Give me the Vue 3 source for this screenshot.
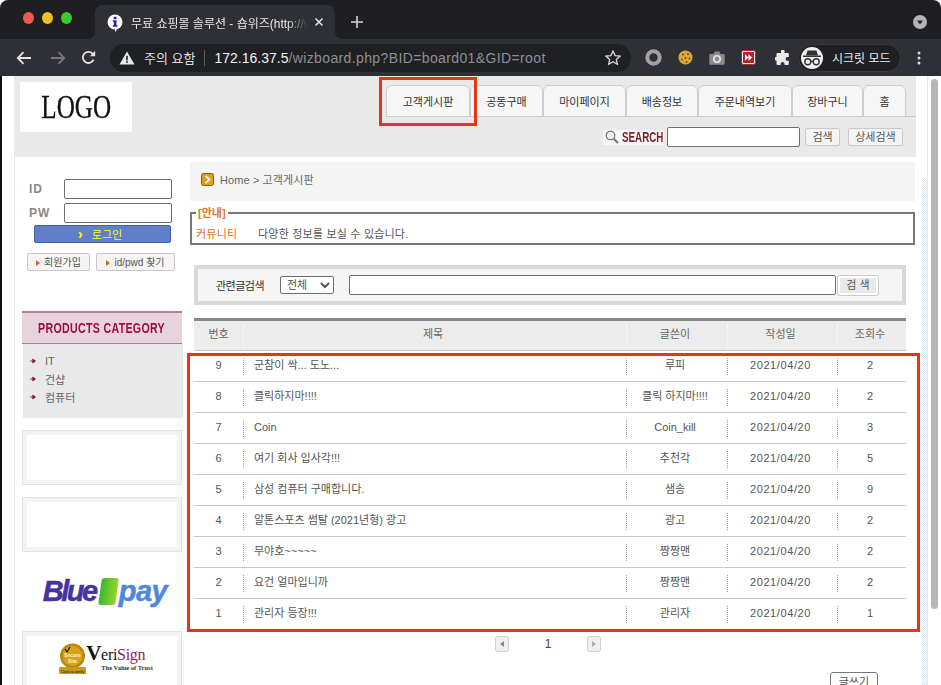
<template>
  <div class="screen">
    <!-- browser chrome -->
    <div class="tabstrip">
      <div class="lights">
        <i class="light red"></i>
        <i class="light yellow"></i>
        <i class="light green"></i>
      </div>
      <div class="tab">
        <svg class="favicon" width="16" height="18" viewBox="0 0 16 18">
          <circle cx="8" cy="8" r="7.5" fill="#fff" />
          <path d="M8 14l0 4 4-5z" fill="#fff" />
          <rect x="6.7" y="2.8" width="2.8" height="2.4" fill="#3a18b0" />
          <path d="M5.8 6.3h3.7v5h1v1.400H5.800v-1.400h1v-3.600h-1z" fill="#3a18b0" />
        </svg>
        <span class="tab-title">무료 쇼핑몰 솔루션 - 숍위즈(http://w</span>
        <svg class="tab-close" width="10" height="10" viewBox="0 0 10 10">
          <path d="M1.5 1.5l7 7M8.5 1.5l-7 7" stroke="#e6e6e6" stroke-width="1.5" />
        </svg>
      </div>
      <svg class="newtab" width="12" height="12" viewBox="0 0 12 12">
        <path d="M6 0v12M0 6h12" stroke="#d4d4d4" stroke-width="1.6" />
      </svg>
      <svg class="tabsearch" width="14" height="14" viewBox="0 0 14 14">
        <circle cx="7" cy="7" r="7" fill="#b4b4b8" />
        <path d="M3.8 5.4h6.4L7 9.6z" fill="#26262a" />
      </svg>
    </div>
    <div class="toolbar">
      <svg class="nav" width="16" height="14" viewBox="0 0 16 14">
        <path d="M15 7H2M7.5 1.2L1.8 7l5.7 5.8" fill="none" stroke="#e4e4e4" stroke-width="1.8" />
      </svg>
      <svg class="nav dim" width="16" height="14" viewBox="0 0 16 14">
        <path d="M1 7h13M8.5 1.2L14.2 7l-5.7 5.8" fill="none" stroke="#77777a" stroke-width="1.8" />
      </svg>
      <svg class="nav reload" width="15" height="15" viewBox="0 0 15 15">
        <path d="M12.6 9.6A5.6 5.6 0 1 1 11.4 3.4L13 5" fill="none" stroke="#e4e4e4" stroke-width="1.8" />
        <path d="M14.2 0.8v5.4H8.8z" fill="#e4e4e4" />
      </svg>
      <div class="omnibox">
        <svg width="16" height="14" viewBox="0 0 16 14">
          <path d="M8 0.5L15.5 13.5H0.5z" fill="#e8e8e8" />
          <rect x="7.2" y="4.8" width="1.6" height="4.6" fill="#1f2023" />
          <rect x="7.2" y="10.2" width="1.6" height="1.6" fill="#1f2023" />
        </svg>
        <span class="warn">주의 요함</span>
        <i class="omni-div"></i>
        <span class="url"><b>172.16.37.5</b>/wizboard.php?BID=board01&amp;GID=root</span>
        <svg class="star" width="16" height="15" viewBox="0 0 16 15">
          <path d="M8 1l2.1 4.6 5 .5-3.8 3.3 1.1 4.9L8 11.8l-4.4 2.5 1.1-4.9L.9 6.1l5-.5z" fill="none" stroke="#d8d8d8" stroke-width="1.3" />
        </svg>
      </div>
      <div class="extensions">
        <svg width="17" height="17" viewBox="0 0 17 17">
          <circle cx="8.5" cy="8.5" r="6.2" fill="none" stroke="#a2a2a4" stroke-width="4" />
        </svg>
        <svg width="15" height="15" viewBox="0 0 15 15">
          <circle cx="7.5" cy="7.5" r="7" fill="#d9a93a" />
          <circle cx="5" cy="4.5" r="1" fill="#6b4314" />
          <circle cx="10" cy="4" r=".9" fill="#6b4314" />
          <circle cx="7.5" cy="8" r="1" fill="#6b4314" />
          <circle cx="11.5" cy="8.5" r="1" fill="#6b4314" />
          <circle cx="4" cy="9.5" r=".9" fill="#6b4314" />
          <circle cx="8.5" cy="12" r="1" fill="#6b4314" />
        </svg>
        <svg width="16" height="14" viewBox="0 0 16 14">
          <path d="M1.5 3h3l1.2-2.4h4.6L11.5 3h3a1.2 1.2 0 0 1 1.2 1.2v8.4a1.2 1.2 0 0 1-1.2 1.2h-13A1.2 1.2 0 0 1 .3 12.600V4.200A1.200 1.200 0 0 1 1.500 3z" fill="#8b8b8d" />
          <circle cx="8" cy="8" r="3.200" fill="none" stroke="#e8e8e8" stroke-width="1.600" />
        </svg>
        <svg width="15" height="15" viewBox="0 0 15 15">
          <rect x=".5" y=".5" width="14" height="14" rx="2" fill="#f4e9e9" stroke="#a82a2a" />
          <rect x="2" y="2" width="11" height="11" fill="#b3262a" />
          <path d="M4 4.200L7.500 7.500 4 10.800zM7.500 4.200L11 7.500 7.500 10.800z" fill="#fff" />
        </svg>
        <svg class="puzzle" width="16" height="16" viewBox="0 0 16 16">
          <path d="M6 1.500a1.800 1.800 0 0 1 3.600 0V3h3.200a1 1 0 0 1 1 1v3h-1.300a1.900 1.900 0 0 0 0 3.800h1.300V14a1 1 0 0 1-1 1H9.500v-1.200a1.900 1.900 0 0 0-3.800 0V15H2.500a1 1 0 0 1-1-1V10.500H.9a1.800 1.800 0 0 1 0-3.600h.6V4a1 1 0 0 1 1-1H6z" fill="#ebebeb" />
        </svg>
      </div>
      <div class="incognito">
        <span class="spy">
          <svg width="20" height="18" viewBox="0 0 20 18">
            <path d="M5.500 1.500h9l1.500 5H4z" fill="#333" />
            <rect x="1" y="6.500" width="18" height="1.500" fill="#333" />
            <circle cx="5.800" cy="12.800" r="3" fill="none" stroke="#333" stroke-width="1.400" />
            <circle cx="14.200" cy="12.800" r="3" fill="none" stroke="#333" stroke-width="1.400" />
            <path d="M8.800 12.500h2.400" stroke="#333" stroke-width="1.400" />
          </svg>
        </span>
        <span>시크릿 모드</span>
      </div>
      <svg class="kebab" width="4" height="14" viewBox="0 0 4 14">
        <circle cx="2" cy="2" r="1.500" fill="#dcdcdc" />
        <circle cx="2" cy="7" r="1.500" fill="#dcdcdc" />
        <circle cx="2" cy="12" r="1.500" fill="#dcdcdc" />
      </svg>
    </div>

    <div class="viewport">
      <div class="edge"></div>
      <div class="site">
        <!-- shop header -->
        <div class="top">
          <div class="logo"><span>LOGO</span></div>
          <div class="top-right">
            <div class="tabs">
              <a v-for="t in tabs" :key="t.label" class="menu-tab" :style="{ width: t.w + 'px' }">{{ t.label }}</a>
            </div>
            <div class="top-search">
              <span class="search-label">
                <svg width="14" height="14" viewBox="0 0 14 14">
                  <circle cx="5.500" cy="5.500" r="4.300" fill="#f4f4f4" stroke="#666" stroke-width="1.100" />
                  <path d="M8.800 8.800l4.200 4.200" stroke="#777" stroke-width="2" />
                </svg>
                <b>SEARCH</b>
              </span>
              <input class="field top-input" type="text" />
              <button class="small-btn btn-a">검색</button>
              <button class="small-btn btn-b">상세검색</button>
            </div>
          </div>
        </div>

        <div class="cols">
          <!-- left column -->
          <div class="side">
            <div class="login-row first">
              <label>ID</label>
              <input class="field" type="text" />
            </div>
            <div class="login-row">
              <label>PW</label>
              <input class="field" type="password" />
            </div>
            <button class="login-btn"><span class="chev">›</span>로그인</button>
            <div class="member-btns">
              <button class="small-btn mem-a"><i class="tri"></i>회원가입</button>
              <button class="small-btn mem-b"><i class="tri"></i>id/pwd 찾기</button>
            </div>

            <div class="cat-title"><span>PRODUCTS CATEGORY</span></div>
            <ul class="cat-list">
              <li v-for="c in categories" :key="c">
                <svg width="6" height="6" viewBox="0 0 6 6">
                  <path d="M0 3h4M2.800 1L5.500 3 2.800 5z" fill="#8e1040" stroke="#8e1040" stroke-width=".8" />
                </svg>
                <span>{{ c }}</span>
              </li>
            </ul>

            <div class="banner"></div>
            <div class="banner"></div>
            <div class="bluepay">
              <span class="bp-blue">Blue</span>
              <i class="bp-card"></i>
              <span class="bp-pay">pay</span>
            </div>
            <div class="banner verisign">
              <span class="seal">
                <svg width="27" height="31" viewBox="0 0 27 31">
                  <circle cx="13.500" cy="13" r="12.500" fill="#b8860b" />
                  <circle cx="13.500" cy="13" r="10" fill="#d6a21e" />
                  <path d="M6 6l2 3 3-5" fill="none" stroke="#111" stroke-width="1.200" />
                  <text x="13.500" y="14" text-anchor="middle" class="seal-text">Secure</text>
                  <text x="13.500" y="20" text-anchor="middle" class="seal-text">Site</text>
                  <rect x="0" y="24" width="27" height="7" rx="1" fill="#c8991f" />
                  <text x="13.500" y="29.500" text-anchor="middle" class="seal-text dark">Click to verify</text>
                </svg>
              </span>
              <span class="vs-text">
                <span class="vs-name"><b>V</b>eri<em>Sign</em></span>
                <span class="vs-sub">The Value of Trust</span>
              </span>
            </div>
          </div>

          <!-- board -->
          <div class="main">
            <div class="crumb">
              <svg width="13" height="13" viewBox="0 0 13 13">
                <rect x=".5" y=".5" width="12" height="12" rx="2" fill="#e59a1c" stroke="#8d5a10" />
                <path d="M4.500 2.800L8.500 6.500 4.500 10.200" fill="none" stroke="#fff" stroke-width="1.800" />
              </svg>
              <span>Home &gt; 고객게시판</span>
            </div>

            <fieldset class="notice">
              <legend>[안내]</legend>
              <div class="notice-row">
                <span class="notice-name">커뮤니티</span>
                <span>다양한 정보를 보실 수 있습니다.</span>
              </div>
            </fieldset>

            <div class="board-search">
              <span class="bs-label">관련글검색</span>
              <select class="bs-select"><option>전체</option></select>
              <input class="field bs-input" type="text" />
              <button class="bs-btn"><span>검 색</span></button>
            </div>

            <div class="board">
              <div class="board-row head">
                <div class="cell num">번호</div>
                <div class="cell">제목</div>
                <div class="cell">글쓴이</div>
                <div class="cell">작성일</div>
                <div class="cell">조회수</div>
              </div>
              <div v-for="p in posts" :key="p.no" class="board-row">
                <div class="cell num">{{ p.no }}</div>
                <div class="cell subject">{{ p.title }}</div>
                <div class="cell">{{ p.writer }}</div>
                <div class="cell date">2021/04/20</div>
                <div class="cell">{{ p.hits }}</div>
              </div>
            </div>

            <div class="pager">
              <span class="page-btn"><i class="arrow left"></i></span>
              <span class="page-no">1</span>
              <span class="page-btn"><i class="arrow right"></i></span>
            </div>
            <div class="write-row">
              <button class="small-btn write">글쓰기</button>
            </div>
          </div>
        </div>
      </div>
      <div class="scrollzone">
        <div class="dots"></div>
        <div class="track"><div class="thumb"></div></div>
      </div>
    </div>

    <!-- red marks drawn over the screenshot -->
    <div class="mark mark-tab"></div>
    <div class="mark mark-list"></div>
  </div>
</template>

<script setup>
const tabs = [
  { label: '고객게시판', w: 84 },
  { label: '공동구매', w: 73 },
  { label: '마이페이지', w: 83 },
  { label: '배송정보', w: 72 },
  { label: '주문내역보기', w: 94 },
  { label: '장바구니', w: 71 },
  { label: '홈', w: 43 }
]

const categories = ['IT', '건샵', '컴퓨터']

const posts = [
  { no: 9, title: '군참이 싹... 도노...', writer: '루피', hits: 2 },
  { no: 8, title: '클릭하지마!!!!', writer: '클릭 하지마!!!!', hits: 2 },
  { no: 7, title: 'Coin', writer: 'Coin_kill', hits: 3 },
  { no: 6, title: '여기 회사 입사각!!!', writer: '추천각', hits: 5 },
  { no: 5, title: '삼성 컴퓨터 구매합니다.', writer: '샘송', hits: 9 },
  { no: 4, title: '알톤스포츠 썸탈 (2021년형) 광고', writer: '광고', hits: 2 },
  { no: 3, title: '무야호~~~~~', writer: '짱짱맨', hits: 2 },
  { no: 2, title: '요건 얼마입니까', writer: '짱짱맨', hits: 2 },
  { no: 1, title: '관리자 등장!!!', writer: '관리자', hits: 1 }
]
</script>

<style>
html,
body {
  margin: 0;
  background: #fff;
}
</style>

<style scoped>
.screen {
  position: relative;
  width: 941px;
  height: 685px;
  overflow: hidden;
  display: flex;
  flex-direction: column;
  background: #fff;
  font-family: "Liberation Sans", "Noto Sans CJK KR", sans-serif;
  font-size: 11px;
  color: #555;
}

/* chrome */
.tabstrip {
  height: 39px;
  flex: none;
  display: flex;
  align-items: flex-end;
  background: #1f1f22;
  border-radius: 8px 8px 0 0;
}
.lights {
  display: flex;
  gap: 8px;
  padding: 0 0 15px 23px;
  width: 72px;
  box-sizing: border-box;
}
.light {
  width: 12px;
  height: 12px;
  border-radius: 50%;
}
.red { background: #ec5a52; }
.yellow { background: #efc121; }
.green { background: #3ccb2f; }
.tab {
  position: relative;
  margin-left: 23px;
  width: 240px;
  height: 34px;
  display: flex;
  align-items: center;
  background: #2f3035;
  border-radius: 8px 8px 0 0;
  padding: 0 11px 0 12px;
  box-sizing: border-box;
  flex: none;
}
.tab::before,
.tab::after {
  content: "";
  position: absolute;
  bottom: 0;
  width: 8px;
  height: 8px;
}
.tab::before {
  left: -8px;
  background: radial-gradient(circle at 0 0, transparent 8px, #2f3035 8.5px);
}
.tab::after {
  right: -8px;
  background: radial-gradient(circle at 100% 0, transparent 8px, #2f3035 8.5px);
}
.favicon { flex: none; margin-top: 2px; }
.tab-title {
  margin-left: 8px;
  width: 177px;
  overflow: hidden;
  white-space: nowrap;
  font-size: 12px;
  color: #e6e6e6;
  mask-image: linear-gradient(90deg, #000 88%, transparent);
}
.tab-close { margin-left: 6px; flex: none; }
.newtab {
  margin: 0 0 11px 16px;
  flex: none;
}
.tabsearch {
  margin: 0 0 10px 550px;
  flex: none;
}
.toolbar {
  height: 37px;
  flex: none;
  display: flex;
  align-items: center;
  background: #2f3035;
  padding-left: 16px;
  box-sizing: border-box;
}
.nav { flex: none; margin-right: 18px; }
.nav.dim { margin-right: 15px; }
.nav.reload { margin-right: 14px; }
.omnibox {
  width: 521px;
  height: 28px;
  display: flex;
  align-items: center;
  flex: none;
  background: #1f2023;
  border-radius: 14px;
  padding-left: 9px;
  box-sizing: border-box;
}
.warn {
  margin-left: 9px;
  font-size: 13px;
  color: #dedede;
}
.omni-div {
  width: 1px;
  height: 16px;
  margin: 0 9px 0 9px;
  background: #5d5d60;
}
.url {
  font-size: 14px;
  color: #8f8f92;
  white-space: nowrap;
  letter-spacing: 0.38px;
}
.url b {
  font-weight: 400;
  color: #f2f2f2;
  letter-spacing: 0;
}
.star { margin-left: 59px; flex: none; }
.extensions {
  display: flex;
  align-items: center;
  gap: 16px;
  margin-left: 14px;
  flex: none;
}
.puzzle { margin-left: 3px; }
.incognito {
  display: flex;
  align-items: center;
  gap: 9px;
  width: 103px;
  height: 28px;
  margin-left: 7px;
  border-radius: 14px;
  background: #1f2023;
  border: 1px solid #3a3a3e;
  box-sizing: border-box;
  padding-left: 2px;
  font-size: 12px;
  color: #ececec;
  flex: none;
  white-space: nowrap;
}
.spy {
  width: 22px;
  height: 22px;
  border-radius: 50%;
  background: #f0f0f0;
  display: flex;
  align-items: center;
  justify-content: center;
  flex: none;
}
.kebab { margin-left: 16px; flex: none; }

/* page frame */
.viewport {
  flex: 1;
  min-height: 0;
  display: flex;
  overflow: hidden;
}
.edge {
  width: 14px;
  flex: none;
  box-sizing: border-box;
  border-left: 2px solid #111;
}
.site {
  width: 902px;
  flex: none;
}
.top {
  height: 81px;
  display: flex;
  justify-content: space-between;
  background: #e9e9e9;
}
.logo {
  width: 112px;
  height: 50px;
  margin: 6px 0 0 6px;
  background: #fff;
  display: flex;
  align-items: center;
  justify-content: center;
  padding-left: 1px;
  box-sizing: border-box;
}
.logo span {
  font-family: "Liberation Serif", serif;
  font-size: 34px;
  color: #111;
  transform: scaleX(0.74);
  -webkit-text-stroke: 0.3px #111;
}
.top-right {
  width: 530px;
  padding-top: 9px;
  box-sizing: border-box;
}
.tabs {
  display: flex;
  height: 32px;
  box-sizing: border-box;
  border-bottom: 1px solid #c8c8c8;
}
.menu-tab {
  box-sizing: border-box;
  height: 32px;
  background: #f6f6f6;
  border: 1px solid #cdcdcd;
  border-radius: 6px 6px 0 0;
  display: flex;
  align-items: center;
  justify-content: center;
  color: #333;
  font-size: 11px;
}
.top-search {
  display: flex;
  align-items: center;
  height: 20px;
  margin-top: 10px;
}
.search-label {
  width: 61px;
  height: 15px;
  margin-left: 217px;
  display: flex;
  align-items: center;
  gap: 3px;
  background: #f6f6f6;
  padding-left: 2px;
  box-sizing: border-box;
  flex: none;
}
.search-label svg { flex: none; }
.search-label b {
  flex: none;
  width: 42px;
  color: #7e1f2c;
  font-size: 14px;
  white-space: nowrap;
  transform: scaleX(0.7);
  transform-origin: left;
}
.field {
  box-sizing: border-box;
  border: 1px solid #6f6f6f;
  border-radius: 2px;
  background: #fff;
  padding: 0;
  margin: 0;
  outline: none;
  flex: none;
}
.top-input {
  width: 133px;
  height: 20px;
  margin-left: 3px;
}
.small-btn {
  box-sizing: border-box;
  height: 18px;
  padding: 0;
  background: #f4f4f4;
  border: 1px solid #c8c8c8;
  border-radius: 2px;
  color: #555;
  font-family: inherit;
  font-size: 11px;
  line-height: 15px;
  flex: none;
}
.btn-a { width: 35px; margin-left: 5px; }
.btn-b { width: 55px; margin-left: 8px; }

.cols {
  display: flex;
  align-items: flex-start;
}

/* left column */
.side {
  width: 176px;
  flex: none;
  box-sizing: border-box;
  border-left: 1px solid #e6e6e6;
  height: 560px;
}
.login-row {
  display: flex;
  align-items: center;
  height: 20px;
  margin-top: 4px;
  padding-left: 14px;
}
.login-row.first { margin-top: 22px; }
.login-row label {
  width: 35px;
  flex: none;
  font-size: 12px;
  font-weight: 700;
  letter-spacing: 1px;
  color: #888;
}
.login-row .field {
  width: 108px;
  height: 20px;
}
.login-btn {
  display: flex;
  align-items: center;
  justify-content: center;
  box-sizing: border-box;
  width: 137px;
  height: 18px;
  margin: 2px 0 0 19px;
  padding: 0 5px 0 0;
  background: #5f7fc9;
  border: 1px solid #3f60a8;
  border-radius: 2px;
  color: #ffff00;
  font-family: inherit;
  font-size: 11px;
}
.chev {
  font-size: 15px;
  font-weight: 700;
  line-height: 14px;
  margin-right: 9px;
}
.member-btns {
  display: flex;
  margin: 10px 0 0 12px;
  gap: 6px;
}
.mem-a { width: 63px; font-size: 10px; }
.mem-b { width: 79px; font-size: 10px; }
.tri {
  display: inline-block;
  border-left: 4px solid #d9641a;
  border-top: 3px solid transparent;
  border-bottom: 3px solid transparent;
  margin-right: 4px;
}
.cat-title {
  box-sizing: border-box;
  width: 160px;
  height: 33px;
  margin: 40px 0 0 7px;
  background: #e6d3dc;
  border-top: 2px solid #b97a94;
  border-bottom: 1px solid #ad7a91;
  display: flex;
  align-items: center;
  justify-content: center;
  color: #a00c45;
  white-space: nowrap;
}
.cat-title span {
  flex: none;
  font-size: 14px;
  font-weight: 700;
  letter-spacing: 0.4px;
  transform: scaleX(0.76);
}
.cat-list {
  list-style: none;
  box-sizing: border-box;
  width: 160px;
  height: 74px;
  margin: 0 0 0 8px;
  padding: 8px 0 0 7px;
  background: #e9e9e9;
}
.cat-list li {
  display: flex;
  align-items: center;
  gap: 9px;
  height: 18px;
  font-size: 11px;
  color: #666;
}
.banner {
  box-sizing: border-box;
  width: 160px;
  height: 55px;
  margin: 12px 0 0 7px;
  background: #fff;
  border: 1px solid #e2e2e2;
  outline: 4px solid #f3f3f3;
  outline-offset: -5px;
}
.bluepay {
  height: 79px;
  margin-left: 7px;
  width: 160px;
  display: flex;
  align-items: center;
  justify-content: center;
  font-family: "Liberation Sans", sans-serif;
  font-size: 29px;
  font-weight: 700;
  font-style: italic;
  box-sizing: border-box;
  padding-left: 6px;
  -webkit-text-stroke: 0.5px currentColor;
}
.bp-blue {
  color: #46339f;
  letter-spacing: -2.5px;
  margin-right: 2px;
}
.bp-card {
  width: 17px;
  height: 27px;
  margin: 0 2px;
  background: linear-gradient(90deg, #3db62f, #92d72c);
  border-radius: 3px;
  transform: skewX(-8deg);
  flex: none;
}
.bp-pay {
  color: #4d88dc;
  letter-spacing: -0.5px;
}
.verisign {
  height: 59px;
  display: flex;
  align-items: center;
  justify-content: center;
  padding: 0 0 4px 8px;
  margin-top: 0;
}
.seal { height: 31px; display: block; }
.seal-text {
  font-family: "Liberation Sans", sans-serif;
  font-size: 5px;
  font-weight: 700;
  fill: #fff3c4;
}
.seal-text.dark {
  font-size: 3.6px;
  fill: #4a3608;
}
.vs-text {
  display: flex;
  flex-direction: column;
  font-family: "Liberation Serif", serif;
  color: #111;
}
.vs-name {
  font-size: 16px;
  line-height: 17px;
  letter-spacing: -0.3px;
}
.vs-name b { font-size: 21px; font-weight: 700; }
.vs-name em { font-style: normal; color: #8a1c62; }
.vs-sub {
  font-size: 6.500px;
  font-weight: 700;
  line-height: 9px;
  margin-left: 15px;
  color: #333;
  white-space: nowrap;
}

/* board */
.main {
  width: 725px;
  flex: none;
  padding-top: 5px;
}
.crumb {
  height: 39px;
  box-sizing: border-box;
  display: flex;
  align-items: center;
  gap: 6px;
  padding: 0 0 5px 11px;
  background: #f4f4f4;
  font-size: 11px;
  letter-spacing: 0.1px;
  color: #666;
}
.notice {
  box-sizing: border-box;
  width: 725px;
  height: 39px;
  margin: 5px 0 0;
  padding: 0 4px;
  border: 2px solid #777;
  min-width: 0;
}
.notice legend {
  padding: 0 2px;
  margin: 0;
  font-size: 11px;
  line-height: 14px;
  font-weight: 700;
  color: #e2741a;
}
.notice-row {
  display: flex;
  height: 20px;
  align-items: center;
  padding-top: 3px;
  font-size: 11px;
  letter-spacing: 0.2px;
  color: #555;
}
.notice-name {
  width: 62px;
  color: #d9701c;
}
.board-search {
  box-sizing: border-box;
  width: 712px;
  height: 40px;
  margin: 20px 0 0 4px;
  display: flex;
  align-items: center;
  border: 4px solid #d8d8d8;
  background: #f5f5f5;
  padding-left: 18px;
}
.bs-label {
  width: 48px;
  flex: none;
  color: #333;
  letter-spacing: -0.5px;
  white-space: nowrap;
}
.bs-select {
  box-sizing: border-box;
  width: 54px;
  height: 18px;
  margin-left: 16px;
  padding: 0 0 0 2px;
  background: #fff;
  border: 1px solid #6f6f6f;
  border-radius: 2px;
  font-family: inherit;
  font-size: 11px;
  color: #555;
  flex: none;
}
.bs-input {
  width: 487px;
  height: 20px;
  margin-left: 15px;
}
.bs-btn {
  box-sizing: border-box;
  width: 42px;
  height: 21px;
  margin-left: 1px;
  padding: 2px;
  background: #fff;
  border: 1px solid #c8c8c8;
  border-radius: 3px;
  font-family: inherit;
  font-size: 11px;
  color: #555;
  flex: none;
}
.bs-btn span {
  display: block;
  height: 15px;
  line-height: 15px;
  background: #e9e9e9;
}
.board {
  width: 712px;
  margin: 13px 0 0 4px;
}
.board-row {
  display: grid;
  grid-template-columns: 49px 383px 101px 110px 69px;
  align-items: center;
  box-sizing: border-box;
  height: 31px;
  border-bottom: 1px solid #c8c8c8;
}
.board-row.head {
  height: 33px;
  border-top: 3px solid #888;
  background: #ececec;
  color: #666;
}
.cell {
  box-sizing: border-box;
  height: 17px;
  line-height: 15px;
  text-align: center;
  padding-right: 4px;
  border-left: 1px dotted #999;
  white-space: nowrap;
}
.head .cell {
  height: 24px;
  line-height: 20px;
  border-left-color: #fff;
}
.cell.num {
  border-left: none;
  padding-right: 0;
}
.cell.subject {
  text-align: left;
  padding-left: 10px;
}
.cell.date { letter-spacing: 0.6px; }
.pager {
  display: flex;
  align-items: center;
  justify-content: center;
  width: 712px;
  margin: 6px 0 0 2px;
}
.page-btn {
  box-sizing: border-box;
  width: 14px;
  height: 16px;
  display: flex;
  align-items: center;
  justify-content: center;
  background: #f0f0f0;
  border: 1px solid #cfcfcf;
  border-radius: 3px;
  flex: none;
}
.arrow {
  border-top: 3px solid transparent;
  border-bottom: 3px solid transparent;
}
.arrow.left { border-right: 4px solid #888; }
.arrow.right { border-left: 4px solid #aaa; }
.page-no {
  width: 78px;
  text-align: center;
  font-size: 12px;
  color: #444;
}
.write-row {
  display: flex;
  justify-content: flex-end;
  width: 688px;
  margin: 20px 0 0 0;
}
.write {
  width: 48px;
  height: 20px;
  background: #fff;
  border-color: #777;
  border-radius: 3px;
}

/* scrollbar */
.scrollzone {
  flex: 1;
  display: flex;
  min-width: 0;
}
.dots {
  width: 5px;
  margin: 103px 0 0 6px;
  flex: none;
  background: repeating-conic-gradient(#d8e6f0 0 25%, #fff 0 50%) 0 0 / 2px 2px;
}
.track {
  flex: 1;
  box-sizing: border-box;
  border-left: 1px solid #e8e8e8;
  padding: 3px 3px 0 3px;
}
.thumb {
  height: 530px;
  background: #b6b6b6;
  border-radius: 4px;
}

/* annotations */
.mark {
  position: absolute;
  box-sizing: border-box;
  border: 3px solid #e8321c;
  pointer-events: none;
}
.mark-tab {
  left: 379px;
  top: 77px;
  width: 98px;
  height: 49px;
}
.mark-list {
  left: 187px;
  top: 353px;
  width: 733px;
  height: 279px;
}
</style>
